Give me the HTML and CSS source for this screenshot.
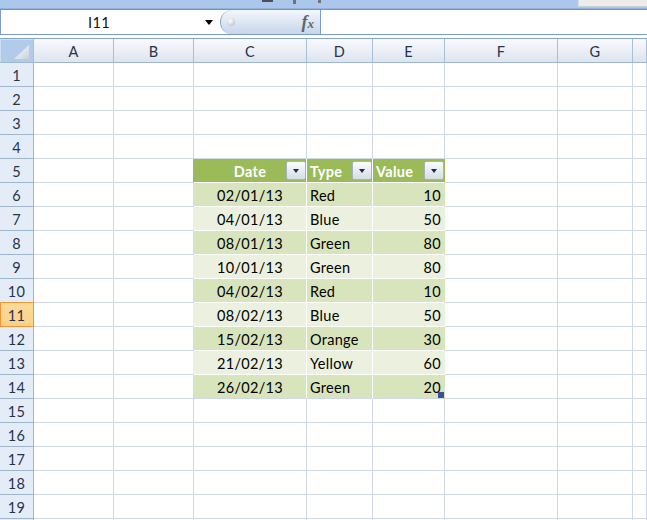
FILE: index.html
```html
<!DOCTYPE html>
<html>
<head>
<meta charset="utf-8">
<link rel="stylesheet" href="styles.css">
</head>
<body>
<div class="ribbon">
  <span class="mk mk1"></span><span class="mk mk2"></span><span class="mk mk3"></span>
  <span class="rbox"></span>
</div>
<div class="fbar">
  <div class="namebox"><span class="nb-text">I11</span><span class="nb-arrow"></span></div>
  <div class="fxpill"><span class="dot"></span><span class="fx">f<span class="fxx">x</span></span></div>
  <div class="finput"></div>
</div>
<div class="sheet">
  <div class="row hdr">
    <div class="corner"><svg width="33" height="23" viewBox="0 0 33 23"><defs><linearGradient id="tg" x1="0" y1="0" x2="1" y2="1"><stop offset="0" stop-color="#ffffff"/><stop offset="1" stop-color="#c9d1db"/></linearGradient></defs><polygon points="14,19 29,5 29,19" fill="url(#tg)"/></svg></div>
    <div class="ch">A</div><div class="ch">B</div><div class="ch">C</div><div class="ch">D</div><div class="ch">E</div><div class="ch">F</div><div class="ch">G</div><div class="ch"></div>
  </div>
  <div class="row"><div class="rh">1</div><div></div><div></div><div></div><div></div><div></div><div></div><div></div><div></div></div>
  <div class="row"><div class="rh">2</div><div></div><div></div><div></div><div></div><div></div><div></div><div></div><div></div></div>
  <div class="row"><div class="rh">3</div><div></div><div></div><div></div><div></div><div></div><div></div><div></div><div></div></div>
  <div class="row"><div class="rh">4</div><div></div><div></div><div></div><div></div><div></div><div></div><div></div><div></div></div>
  <div class="row"><div class="rh">5</div><div></div><div class="bh"></div>
    <div class="h ctr">Date<span class="fbtn"></span></div>
    <div class="h txt">Type<span class="fbtn"></span></div>
    <div class="h txt e">Value<span class="fbtn"></span></div>
    <div></div><div></div><div></div></div>
  <div class="row"><div class="rh">6</div><div></div><div class="bd"></div><div class="d ctr">02/01/13</div><div class="d txt">Red</div><div class="d num e">10</div><div></div><div></div><div></div></div>
  <div class="row"><div class="rh">7</div><div></div><div class="bl"></div><div class="l ctr">04/01/13</div><div class="l txt">Blue</div><div class="l num e">50</div><div></div><div></div><div></div></div>
  <div class="row"><div class="rh">8</div><div></div><div class="bd"></div><div class="d ctr">08/01/13</div><div class="d txt">Green</div><div class="d num e">80</div><div></div><div></div><div></div></div>
  <div class="row"><div class="rh">9</div><div></div><div class="bl"></div><div class="l ctr">10/01/13</div><div class="l txt">Green</div><div class="l num e">80</div><div></div><div></div><div></div></div>
  <div class="row"><div class="rh pre-sel">10</div><div></div><div class="bd"></div><div class="d ctr">04/02/13</div><div class="d txt">Red</div><div class="d num e">10</div><div></div><div></div><div></div></div>
  <div class="row"><div class="rh sel">11</div><div></div><div class="bl"></div><div class="l ctr">08/02/13</div><div class="l txt">Blue</div><div class="l num e">50</div><div></div><div></div><div></div></div>
  <div class="row"><div class="rh">12</div><div></div><div class="bd"></div><div class="d ctr">15/02/13</div><div class="d txt">Orange</div><div class="d num e">30</div><div></div><div></div><div></div></div>
  <div class="row"><div class="rh">13</div><div></div><div class="bl"></div><div class="l ctr">21/02/13</div><div class="l txt">Yellow</div><div class="l num e">60</div><div></div><div></div><div></div></div>
  <div class="row end"><div class="rh">14</div><div></div><div class="bd"></div><div class="d ctr">26/02/13</div><div class="d txt">Green</div><div class="d num e">20<span class="handle"></span></div><div></div><div></div><div></div></div>
  <div class="row"><div class="rh">15</div><div></div><div></div><div></div><div></div><div></div><div></div><div></div><div></div></div>
  <div class="row"><div class="rh">16</div><div></div><div></div><div></div><div></div><div></div><div></div><div></div><div></div></div>
  <div class="row"><div class="rh">17</div><div></div><div></div><div></div><div></div><div></div><div></div><div></div><div></div></div>
  <div class="row"><div class="rh">18</div><div></div><div></div><div></div><div></div><div></div><div></div><div></div><div></div></div>
  <div class="row"><div class="rh">19</div><div></div><div></div><div></div><div></div><div></div><div></div><div></div><div></div></div>
  <div class="row"><div class="rh"></div><div></div><div></div><div></div><div></div><div></div><div></div><div></div><div></div></div>
</div>
</body>
</html>
```
FILE: styles.css
```css
* { box-sizing: border-box; }
html, body { margin: 0; padding: 0; }
body {
  width: 647px;
  height: 520px;
  overflow: hidden;
  background: #fff;
  font-family: Lato, "Open Sans", sans-serif;
  font-size: 14.5px;
  letter-spacing: 0.3px;
  color: #000;
}

/* top ribbon remnant */
.ribbon {
  height: 9px;
  background: #abc7ec;
  border-bottom: 1px solid #94b3dc;
  display: flex;
  align-items: flex-start;
}
.mk { display: block; background: #4a4f58; }
.mk1 { margin-left: 262px; width: 11px; height: 2px; }
.mk2 { margin-left: 20px; width: 3px; height: 4px; background: #6d7480; }
.mk3 { margin-left: 22px; width: 3px; height: 3px; background: #6d7480; }
.rbox {
  margin-left: auto;
  width: 69px;
  height: 7px;
  background: #ececec;
  border-left: 1px solid #d6dde6;
  border-bottom: 1px solid #c9cfd8;
}

/* formula bar */
.fbar {
  display: flex;
  height: 26px;
  border-top: 1px solid #6f93c3;
  border-bottom: 1px solid #7b9cc7;
  border-left: 1px solid #7b9cc7;
}
.namebox { display: flex; width: 219px; background: #fff; }
.nb-text { width: 196px; text-align: center; line-height: 25px; color: #111; }
.nb-arrow {
  width: 23px;
  display: flex;
  align-items: center;
  justify-content: center;
}
.nb-arrow::after {
  content: "";
  border-left: 4.5px solid transparent;
  border-right: 4.5px solid transparent;
  border-top: 5px solid #000;
}
.fxpill {
  width: 101px;
  display: flex;
  align-items: center;
  justify-content: space-between;
  padding: 0 6px 0 6px;
  border-radius: 12px 0 0 12px;
  border-left: 1px solid #8ba6cb;
  border-right: 1px solid #7b9cc7;
  background: linear-gradient(#f4f7fb, #dbe5f2 55%, #c6d5ea);
}
.dot {
  width: 8px;
  height: 8px;
  border-radius: 50%;
  background: radial-gradient(circle at 40% 35%, #ffffff, #aeb6c2);
}
.fx {
  font-family: "Liberation Serif", serif;
  font-style: italic;
  font-weight: bold;
  font-size: 18px;
  color: #5f6670;
  letter-spacing: 0;
  line-height: 1;
}
.fxx { font-size: 13px; }
.finput { flex: 1; background: #fff; }

/* sheet */
.sheet { margin-top: 3px; }
.row {
  display: grid;
  grid-template-columns: 34px 80px 80px 113px 66px 72px 113px 75px 1fr;
  height: 24px;
}
.row > div {
  border-right: 1px solid #d0d7e5;
  border-bottom: 1px solid #d0d7e5;
  line-height: 23px;
  padding-top: 1px;
  white-space: nowrap;
  overflow: hidden;
}
.row.hdr { height: 25px; border-top: 1px solid #86a4c9; }
.row.hdr > div {
  border-right: 1px solid #a9bfd8;
  border-bottom: 1px solid #9eb6ce;
  padding-top: 1px;
}
.row > .corner {
  background: #b3cbeb;
  border-right-color: #9eb6ce;
  box-shadow: inset 1px 1px 0 #cfdff3;
  padding-top: 0;
}
.corner svg { display: block; }
.row > .ch {
  background: linear-gradient(#f8fafd, #e8edf5 60%, #dde4ee);
  text-align: center;
  color: #27344a;
}
.row > .rh {
  background: #e4ecf7;
  border-right-color: #9eb6ce;
  border-bottom-color: #9eb6ce;
  text-align: center;
  color: #27344a;
}
.row > .rh.pre-sel { border-bottom-color: #f29536; }
.row > .rh.sel {
  background: linear-gradient(#fddb9a, #fbd188);
  border-right-color: #f29536;
  border-bottom-color: #f29536;
  box-shadow: inset 1px 0 0 #f29536;
}

/* table */
.row > .h {
  background: #9bbb59;
  color: #fff;
  font-weight: bold;
  border-right-color: #fff;
  border-bottom-color: #fff;
  position: relative;
}
.row > .d { background: #d8e4bc; border-right-color: #fff; border-bottom-color: #fff; }
.row > .l { background: #ebf1de; border-right-color: #fff; border-bottom-color: #fff; }
.row > .h.e { border-right-color: #9bbb59; }
.row > .d.e { border-right-color: #d8e4bc; }
.row > .l.e { border-right-color: #ebf1de; }
.row.end > .d { border-bottom-color: #d0d7e5; }
.row > .bh { border-right-color: #9bbb59; }
.row > .bd { border-right-color: #d8e4bc; }
.row > .bl { border-right-color: #ebf1de; }

.ctr { text-align: center; }
.txt { padding-left: 3px; }
.num { text-align: right; padding-right: 3px; position: relative; }

.fbtn {
  position: absolute;
  right: 0;
  top: 2px;
  width: 20px;
  height: 19px;
  border: 1px solid #a3b2c6;
  border-radius: 2px;
  background: linear-gradient(#fbfcfd, #e4e9f0 60%, #d6dde7);
  display: flex;
  align-items: center;
  justify-content: center;
}
.fbtn::after {
  content: "";
  margin-top: 1px;
  border-left: 3.5px solid transparent;
  border-right: 3.5px solid transparent;
  border-top: 4px solid #1d2a48;
}
.handle {
  position: absolute;
  right: 0;
  bottom: 0;
  width: 6px;
  height: 6px;
  background: #3b4fa0;
}
```
